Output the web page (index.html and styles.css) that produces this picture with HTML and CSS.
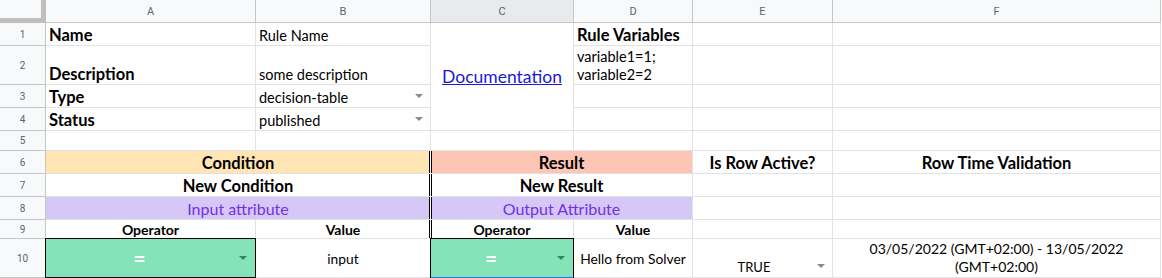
FILE: index.html
```html
<!DOCTYPE html>
<html lang="en">
<head>
<meta charset="utf-8">
<title>Rule sheet</title>
<link rel="stylesheet" href="styles.css">
</head>
<body>
<div class="sheet">
  <div class="corner"></div>
  <div class="hd">A</div>
  <div class="hd">B</div>
  <div class="hd sel">C</div>
  <div class="hd">D</div>
  <div class="hd">E</div>
  <div class="hd">F</div>

  <div class="rn">1</div>
  <div class="c lbl">Name</div>
  <div class="c">Rule Name</div>
  <div class="c doc"><a href="#" class="link">Documentation</a></div>
  <div class="c lbl">Rule Variables</div>
  <div class="c"></div>
  <div class="c"></div>

  <div class="rn">2</div>
  <div class="c lbl">Description</div>
  <div class="c">some description</div>
  <div class="c vars">variable1=1;<br>variable2=2</div>
  <div class="c"></div>
  <div class="c"></div>

  <div class="rn">3</div>
  <div class="c lbl">Type</div>
  <div class="c dd">decision-table<span class="arrow"></span></div>
  <div class="c"></div>
  <div class="c"></div>
  <div class="c"></div>

  <div class="rn">4</div>
  <div class="c lbl">Status</div>
  <div class="c dd">published<span class="arrow"></span></div>
  <div class="c"></div>
  <div class="c"></div>
  <div class="c"></div>

  <div class="rn">5</div>
  <div class="c"></div>
  <div class="c"></div>
  <div class="c"></div>
  <div class="c"></div>
  <div class="c"></div>
  <div class="c"></div>

  <div class="rn">6</div>
  <div class="c span2 ctr head cond lsep">Condition</div>
  <div class="c span2 ctr head res rsep">Result</div>
  <div class="c ctr head">Is Row Active?</div>
  <div class="c ctr head">Row Time Validation</div>

  <div class="rn">7</div>
  <div class="c span2 ctr head lsep">New Condition</div>
  <div class="c span2 ctr head rsep">New Result</div>
  <div class="c"></div>
  <div class="c"></div>

  <div class="rn">8</div>
  <div class="c span2 ctr attr lsep">Input attribute</div>
  <div class="c span2 ctr attr rsep">Output Attribute</div>
  <div class="c"></div>
  <div class="c"></div>

  <div class="rn">9</div>
  <div class="c ctr sub">Operator</div>
  <div class="c ctr sub lsep">Value</div>
  <div class="c ctr sub rsep">Operator</div>
  <div class="c ctr sub">Value</div>
  <div class="c"></div>
  <div class="c"></div>

  <div class="rn">10</div>
  <div class="c op">=<span class="arrow green"></span></div>
  <div class="c ctr mid r10">input</div>
  <div class="c op active">=<span class="arrow green"></span></div>
  <div class="c ctr mid r10">Hello from Solver</div>
  <div class="c bool">TRUE<span class="arrow low"></span></div>
  <div class="c ctr mid wrap">03/05/2022 (GMT+02:00) - 13/05/2022 (GMT+02:00)</div>
</div>
</body>
</html>
```

FILE: styles.css
```css
* { box-sizing: border-box; }

html, body {
  margin: 0;
  padding: 0;
  background: #ffffff;
}

.sheet {
  display: grid;
  grid-template-columns: 46px 210px 175px 143px 119px 140px 328px;
  grid-template-rows: 23px 23px 39px 23px 23px 20px 23px 23px 23px 19px 39px;
  width: 1162px;
  font-family: Lato, "Noto Sans", sans-serif;
  font-size: 14.5px;
  color: #000;
}

.corner {
  background: #f8f9fa;
  border-right: 5px solid #bfbfbf;
  border-bottom: 5px solid #bfbfbf;
}

.hd {
  background: #f8f9fa;
  border-right: 1px solid #c4c7c5;
  border-bottom: 1px solid #c4c7c5;
  display: flex;
  align-items: center;
  justify-content: center;
  font-family: Roboto, Arial, sans-serif;
  font-size: 11px;
  color: #5f6368;
  padding-top: 1px;
}

.hd.sel {
  background: #e8eaed;
}

.rn {
  background: #f8f9fa;
  border-right: 1px solid #c4c7c5;
  border-bottom: 1px solid #c4c7c5;
  display: flex;
  align-items: center;
  justify-content: center;
  font-family: Roboto, Arial, sans-serif;
  font-size: 10px;
  color: #5f6368;
}

.c {
  position: relative;
  border-right: 1px solid #e2e2e3;
  border-bottom: 1px solid #e2e2e3;
  display: flex;
  align-items: flex-end;
  padding: 0 3px 1px;
  white-space: nowrap;
  overflow: hidden;
  line-height: 17px;
}

.lbl {
  font-weight: 700;
  font-size: 16.5px;
  line-height: 19px;
  padding-bottom: 0;
}

.doc {
  grid-row: span 4;
  align-items: center;
  justify-content: center;
  padding: 0;
}

.link {
  color: #1a1ad6;
  text-decoration: underline;
  font-size: 17.5px;
}

.vars {
  align-items: flex-start;
  flex-direction: column;
  justify-content: flex-start;
  line-height: 18px;
  padding-top: 2px;
}

.span2 { grid-column: span 2; }
.ctr { justify-content: center; }
.mid { align-items: center; padding-bottom: 0; }

.head {
  font-weight: 700;
  font-size: 16.5px;
  line-height: 19px;
  padding-bottom: 0;
}

.cond { background: #ffe5b4; }
.res { background: #fcc5b6; }

.attr {
  background: #d6c8f6;
  color: #7330e3;
  font-size: 16px;
  line-height: 19px;
  padding-bottom: 1px;
}

.sub {
  font-weight: 700;
  font-size: 14px;
  line-height: 16px;
  padding-bottom: 0;
}

.lsep {
  border-right-color: #ffffff;
  box-shadow: inset -1px 0 0 #000;
}

.rsep {
  box-shadow: inset 1px 0 0 #000;
}

.dd {
  padding-right: 20px;
}

.arrow {
  position: absolute;
  right: 7px;
  top: 50%;
  margin-top: -2px;
  width: 0;
  height: 0;
  border-left: 4px solid transparent;
  border-right: 4px solid transparent;
  border-top: 4px solid #8a8a8a;
}

.arrow.green {
  border-top-color: #2c8a5c;
  right: 8px;
}

.arrow.low {
  top: auto;
  bottom: 9px;
  margin-top: 0;
}

.op {
  background: #85e3b9;
  color: #ffffff;
  font-weight: 900;
  font-size: 20px;
  justify-content: center;
  align-items: center;
  padding: 0 22px 0 0;
  border-right: 1px solid #000;
  border-bottom: 1px solid #000;
  box-shadow: -1px 0 0 #000, 0 -1px 0 #000, -1px -1px 0 #000;
  overflow: visible;
}

.op.active {
  border-bottom-color: #1a73e8;
}

.r10 {
  font-size: 13.8px;
}

.bool {
  justify-content: center;
  font-size: 13px;
  padding-right: 20px;
  padding-bottom: 1px;
}

.wrap {
  white-space: normal;
  text-align: center;
  font-size: 14px;
  line-height: 18px;
  padding: 0 20px;
}
```
